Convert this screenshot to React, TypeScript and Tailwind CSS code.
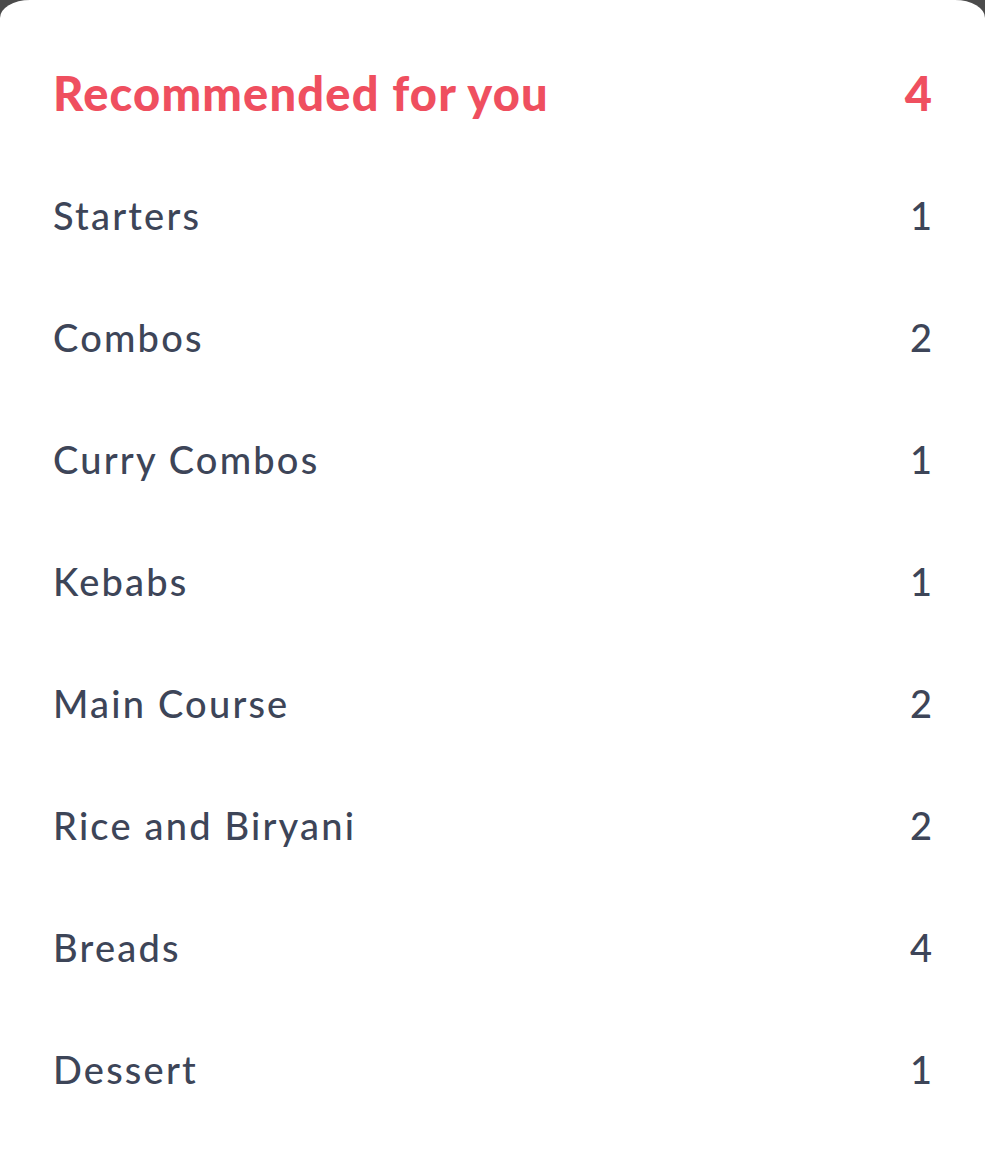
import React from 'react';

const categories = [
  { name: 'Starters', count: 1 },
  { name: 'Combos', count: 2 },
  { name: 'Curry Combos', count: 1 },
  { name: 'Kebabs', count: 1 },
  { name: 'Main Course', count: 2 },
  { name: 'Rice and Biryani', count: 2 },
  { name: 'Breads', count: 4 },
  { name: 'Dessert', count: 1 },
];

export default function App() {
  return (
    <div className="min-h-[1169px] bg-[#4b4b4b] font-['Lato','Liberation_Sans',sans-serif]">
      <div className="min-h-[1169px] bg-white rounded-tl-[30px_18px] rounded-tr-[30px_18px] pt-[32px] px-[53px]">
        <div className="h-[122px] flex items-center justify-between text-[#ef4f5f] font-black text-[47px]">
          <span className="tracking-[1.2px]">Recommended for you</span>
          <span>4</span>
        </div>
        {categories.map((c) => (
          <div
            key={c.name}
            className="h-[122px] flex items-center justify-between text-[#3d4558] font-medium text-[38px]"
          >
            <span className="tracking-[2.2px]">{c.name}</span>
            <span>{c.count}</span>
          </div>
        ))}
      </div>
    </div>
  );
}
